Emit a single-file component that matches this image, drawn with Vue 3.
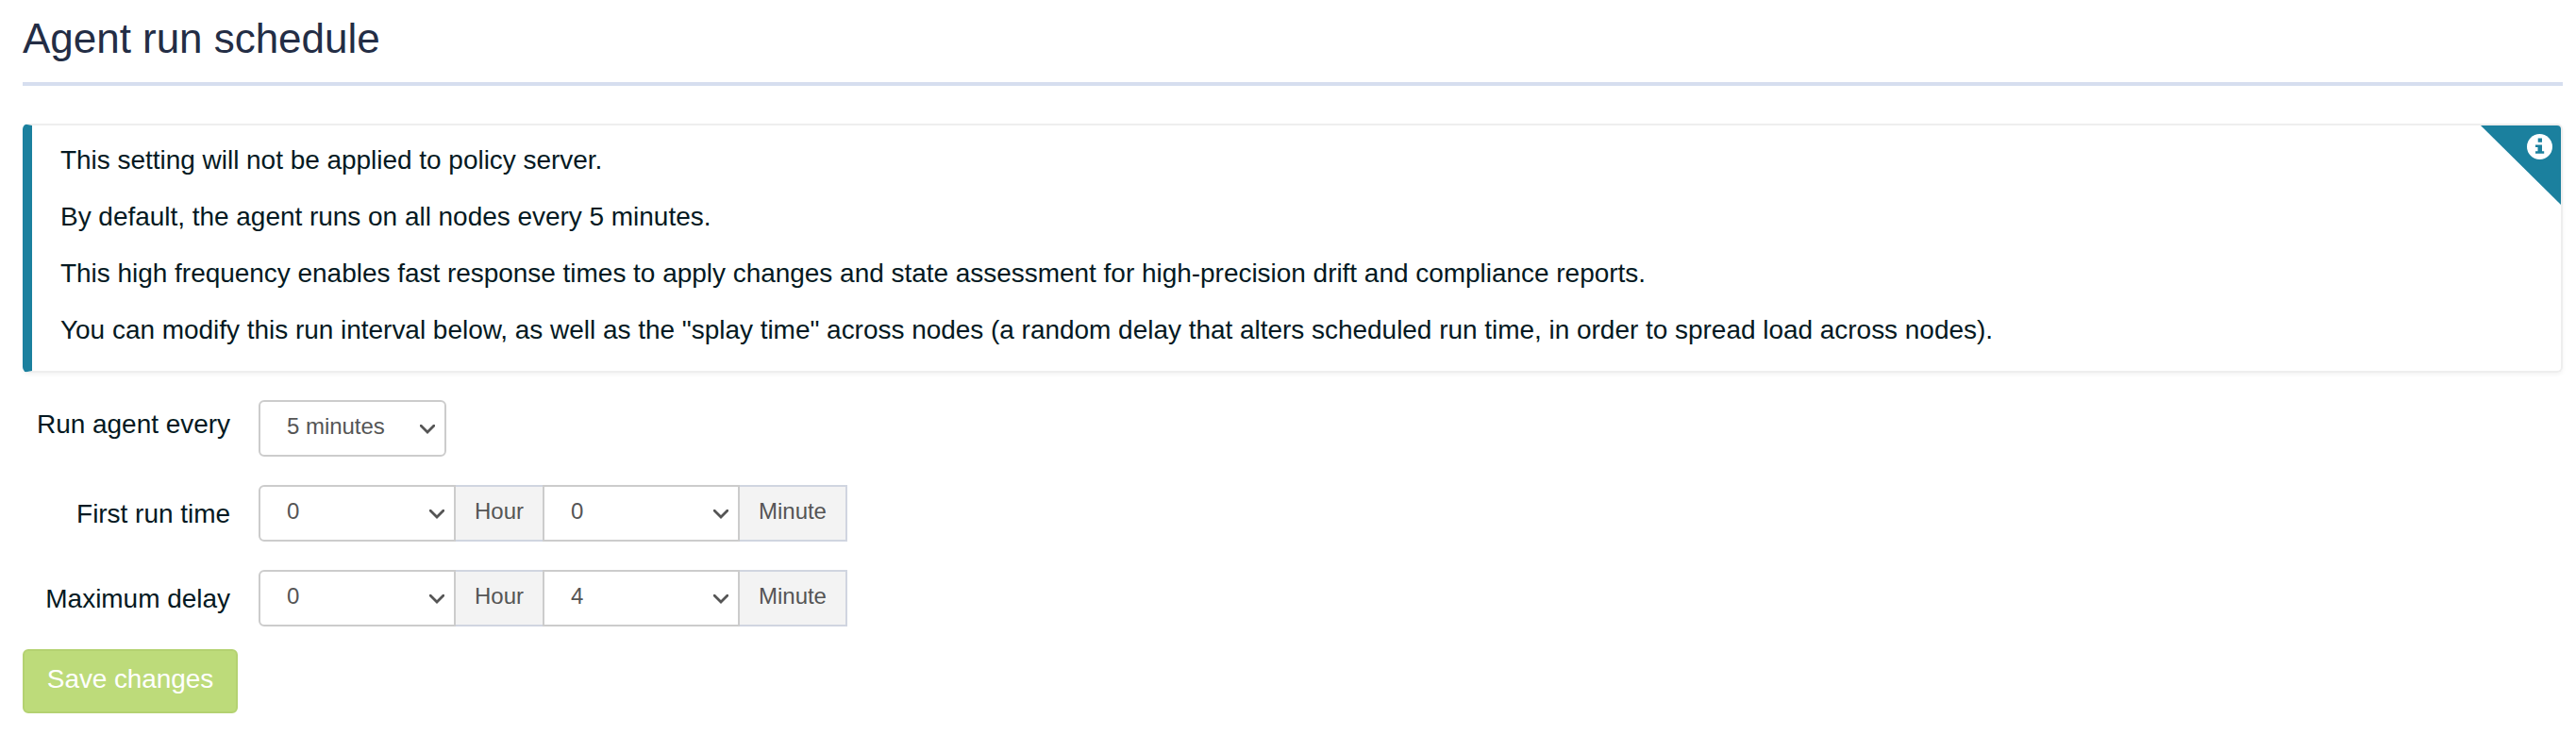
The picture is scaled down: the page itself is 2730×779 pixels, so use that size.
<script setup>
const notes = [
  'This setting will not be applied to policy server.',
  'By default, the agent runs on all nodes every 5 minutes.',
  'This high frequency enables fast response times to apply changes and state assessment for high-precision drift and compliance reports.',
  'You can modify this run interval below, as well as the "splay time" across nodes (a random delay that alters scheduled run time, in order to spread load across nodes).',
]

const rows = [
  { label: 'Run agent every', fields: [{ value: '5 minutes' }] },
  { label: 'First run time', fields: [{ value: '0', unit: 'Hour' }, { value: '0', unit: 'Minute' }] },
  { label: 'Maximum delay', fields: [{ value: '0', unit: 'Hour' }, { value: '4', unit: 'Minute' }] },
]
</script>

<template>
  <main class="page">
    <h1 class="title">Agent run schedule</h1>

    <section class="callout">
      <p v-for="note in notes" :key="note">{{ note }}</p>
      <div class="corner">
        <svg class="info" viewBox="0 0 27 27" aria-hidden="true">
          <circle cx="13.5" cy="13.5" r="13.5" fill="#fff" />
          <path d="M11.7 4.6h4.3v4.1h-4.3zM9 11.4h7v6.8h2.2v2.6H9v-2.6h2.5v-4.3H9z" fill="#1b809e" />
        </svg>
      </div>
    </section>

    <form class="form" @submit.prevent>
      <div v-for="row in rows" :key="row.label" class="row">
        <label class="label" :class="{ grouped: row.fields.length > 1 }">{{ row.label }}</label>
        <div class="group" :class="{ single: row.fields.length === 1 }">
          <template v-for="(field, i) in row.fields" :key="i">
            <div class="select" tabindex="0">
              <span>{{ field.value }}</span>
              <svg class="chevron" viewBox="0 0 16 10" aria-hidden="true">
                <path d="M1.2 1.2 8 8l6.8-6.8" fill="none" stroke="#555" stroke-width="2.8" stroke-linecap="square" />
              </svg>
            </div>
            <span v-if="field.unit" class="addon" :class="field.unit.toLowerCase()">{{ field.unit }}</span>
          </template>
        </div>
      </div>
      <button class="save" type="submit">Save changes</button>
    </form>
  </main>
</template>

<style>
body {
  background: #fff;
}
</style>

<style scoped>
.page {
  box-sizing: border-box;
  height: 779px;
  padding: 0 14px 0 24px;
  overflow: hidden;
  font-family: "Liberation Sans", Arial, sans-serif;
  font-size: 28px;
  line-height: 40px;
  letter-spacing: -0.03px;
  color: #041922;
}
.title {
  box-sizing: border-box;
  height: 91px;
  margin: 0 0 40px;
  padding-top: 16px;
  border-bottom: 4px solid #d6deef;
  font-size: 44px;
  font-weight: 400;
  line-height: 50px;
  color: #232d45;
}
.callout {
  position: relative;
  box-sizing: border-box;
  height: 264px;
  padding: 17px 30px 0;
  border: 2px solid #eee;
  border-left: 10px solid #1b809e;
  border-radius: 6px;
  box-shadow: 0 2px 4px rgba(0, 0, 0, 0.05);
}
.callout p {
  margin: 0 0 20px;
  white-space: nowrap;
}
.corner {
  position: absolute;
  top: 0;
  right: 0;
  width: 85px;
  height: 84px;
  border-top-right-radius: 4px;
  background: #1b809e;
  clip-path: polygon(0 0, 100% 0, 100% 100%);
}
.info {
  position: absolute;
  top: 9px;
  right: 9px;
  width: 27px;
  height: 27px;
}
.form {
  display: flex;
  flex-direction: column;
  align-items: flex-start;
  padding-top: 29px;
}
.row {
  display: flex;
  height: 60px;
  margin-bottom: 30px;
}
.label {
  width: 220px;
  margin-right: 30px;
  padding-top: 6px;
  text-align: right;
}
.label.grouped {
  padding-top: 11px;
}
.group {
  display: flex;
  font-size: 24px;
  line-height: 34px;
  color: #555;
}
.select {
  box-sizing: border-box;
  display: flex;
  justify-content: space-between;
  width: 209px;
  height: 60px;
  padding: 9px 10px 0 28px;
  border: 2px solid #ccc;
}
.select:first-child {
  border-radius: 6px 0 0 6px;
}
.single .select {
  width: 199px;
  border-radius: 6px;
}
.chevron {
  width: 16px;
  height: 10px;
  margin-top: 15px;
}
.addon {
  box-sizing: border-box;
  height: 60px;
  padding-top: 9px;
  border: solid #d0d5e0;
  border-width: 2px 0;
  background: #f3f3f3;
  text-align: center;
}
.hour {
  width: 92px;
}
.minute {
  width: 114px;
  border-right-width: 2px;
}
.save {
  box-sizing: border-box;
  width: 228px;
  height: 68px;
  margin-top: -6px;
  padding: 0 0 5px;
  border: 2px solid #b4d271;
  border-radius: 6px;
  background: #bddb7a;
  font: inherit;
  letter-spacing: -0.1px;
  color: #fff;
}
</style>
